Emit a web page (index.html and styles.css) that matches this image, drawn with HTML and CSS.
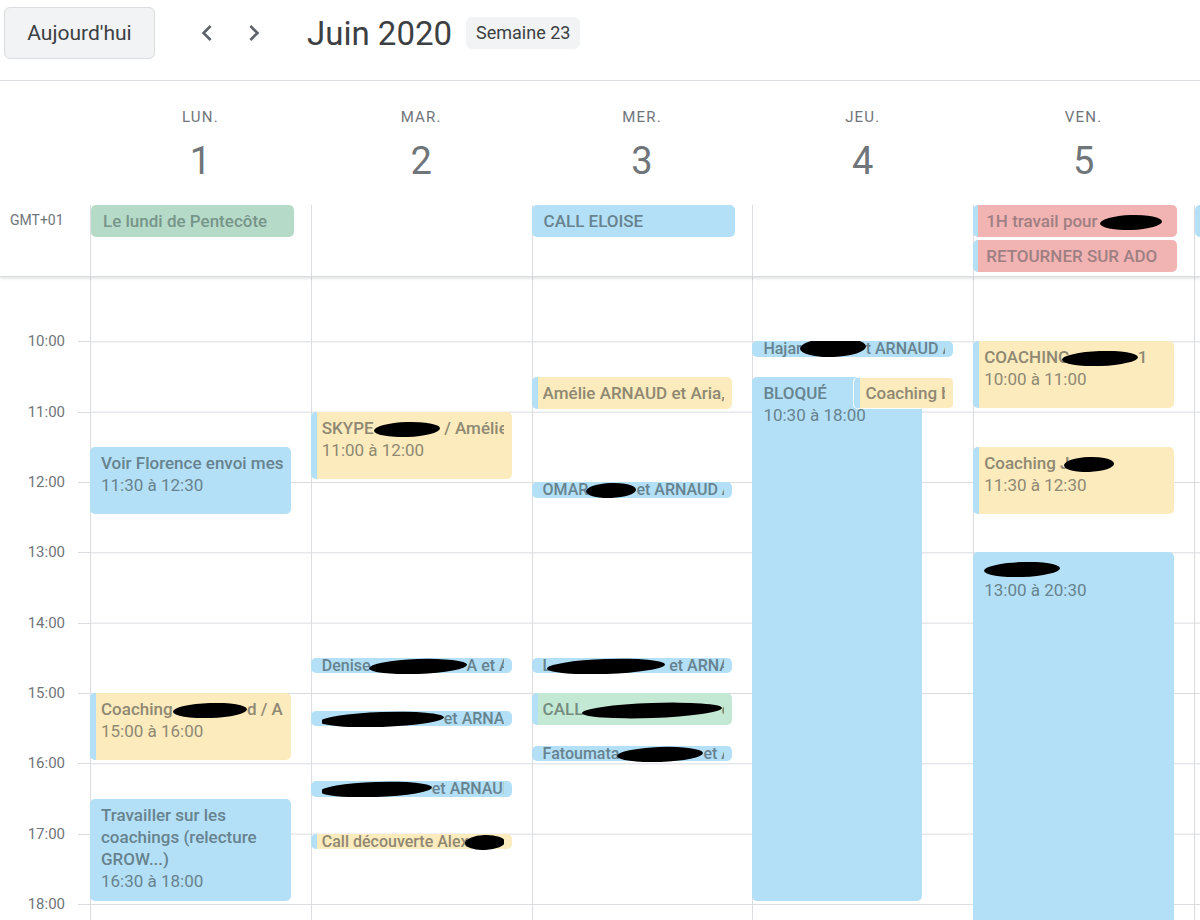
FILE: index.html
```html
<!DOCTYPE html>
<html lang="fr">
<head>
  <meta charset="UTF-8" />
  <title>Agenda - Semaine 23</title>
  <link rel="stylesheet" href="styles.css">
</head>
<body>
  <div class="topbar">
    <button class="today">Aujourd'hui</button>
    <button class="nav" aria-label="Semaine précédente">
      <svg viewBox="0 0 24 24" width="32" height="32"><path d="M15.41 7.41L14 6l-6 6 6 6 1.41-1.41L10.83 12z"/></svg>
    </button>
    <button class="nav" aria-label="Semaine suivante">
      <svg viewBox="0 0 24 24" width="32" height="32"><path d="M10 6L8.59 7.41 13.17 12l-4.58 4.59L10 18l6-6z"/></svg>
    </button>
    <h1 class="month">Juin 2020</h1>
    <span class="week-chip">Semaine 23</span>
  </div>

  <div class="days-head">
    <div></div>
    <div class="dayhead"><span class="dname">LUN.</span><span class="dnum">1</span></div>
    <div class="dayhead"><span class="dname">MAR.</span><span class="dnum">2</span></div>
    <div class="dayhead"><span class="dname">MER.</span><span class="dnum">3</span></div>
    <div class="dayhead"><span class="dname">JEU.</span><span class="dnum">4</span></div>
    <div class="dayhead"><span class="dname">VEN.</span><span class="dnum">5</span></div>
    <div></div>
  </div>

  <div class="allday">
    <div class="tz">GMT+01</div>
    <div class="acol">
      <div class="aev green">Le lundi de Pentecôte</div>
    </div>
    <div class="acol"></div>
    <div class="acol">
      <div class="aev blue">CALL ELOISE</div>
    </div>
    <div class="acol"></div>
    <div class="acol">
      <div class="aev pink stripe">1H travail pour <span class="ink" style="width:62px;margin-left:-2px"></span></div>
      <div class="aev pink stripe">RETOURNER SUR ADO</div>
    </div>
    <div class="acol">
      <div class="aev blue"></div>
    </div>
  </div>

  <div class="week-body">
    <div class="hours">
      <div class="hr"><span>10:00</span></div>
      <div class="hr"><span>11:00</span></div>
      <div class="hr"><span>12:00</span></div>
      <div class="hr"><span>13:00</span></div>
      <div class="hr"><span>14:00</span></div>
      <div class="hr"><span>15:00</span></div>
      <div class="hr"><span>16:00</span></div>
      <div class="hr"><span>17:00</span></div>
      <div class="hr"><span>18:00</span></div>
    </div>

    <!-- lundi -->
    <div class="col">
      <div class="ev blue" style="top:169.8px;height:67px">
        <div class="ttl">Voir Florence envoi mes photos</div>
        <div class="tm">11:30 à 12:30</div>
      </div>
      <div class="ev yellow stripe" style="top:416px;height:67px">
        <div class="ttl">Coaching <span class="ink" style="width:74px;margin-left:-4px"></span>d / Amélie</div>
        <div class="tm">15:00 à 16:00</div>
      </div>
      <div class="ev blue wrap" style="top:521.5px;height:102.5px">
        <div class="ttl">Travailler sur les coachings (relecture GROW...)</div>
        <div class="tm">16:30 à 18:00</div>
      </div>
    </div>

    <!-- mardi -->
    <div class="col">
      <div class="ev yellow stripe" style="top:134.7px;height:67px">
        <div class="ttl">SKYPE <span class="ink" style="width:66px;margin-left:-4px"></span> / Amélie</div>
        <div class="tm">11:00 à 12:00</div>
      </div>
      <div class="ev blue pill" style="top:380.8px;height:15.5px">
        <div class="ttl">Denise <span class="ink" style="width:98px;margin-left:-6px"></span>A et ARNAUD</div>
      </div>
      <div class="ev blue pill" style="top:433.6px;height:15.5px">
        <div class="ttl"><span class="ink" style="width:124px;margin-left:-2px"></span>et ARNAUD</div>
      </div>
      <div class="ev blue pill" style="top:504px;height:15.5px">
        <div class="ttl"><span class="ink" style="width:112px;margin-left:-2px"></span>et ARNAUD</div>
      </div>
      <div class="ev yellow stripe pill" style="top:556.7px;height:15.5px">
        <div class="ttl">Call découverte Alex<span class="ink" style="width:40px;margin-left:-4px"></span></div>
      </div>
    </div>

    <!-- mercredi -->
    <div class="col">
      <div class="ev yellow stripe" style="top:99.5px;height:32px">
        <div class="ttl">Amélie ARNAUD et Aria, coaching</div>
      </div>
      <div class="ev blue pill" style="top:205px;height:15.5px">
        <div class="ttl">OMAR<span class="ink" style="width:50px;margin-left:-2px"></span>et ARNAUD Amélie</div>
      </div>
      <div class="ev blue pill" style="top:380.8px;height:15.5px">
        <div class="ttl">L<span class="ink" style="width:118px;margin-left:-4px"></span> et ARNAUD</div>
      </div>
      <div class="ev green-ev stripe" style="top:416px;height:32px">
        <div class="ttl">CALL <span class="ink" style="width:140px;margin-left:-6px"></span>é</div>
      </div>
      <div class="ev blue pill" style="top:468.8px;height:15.5px">
        <div class="ttl">Fatoumata <span class="ink" style="width:86px;margin-left:-6px"></span>et ARNAUD</div>
      </div>
    </div>

    <!-- jeudi -->
    <div class="col">
      <div class="ev blue pill" style="top:64.3px;height:15.5px">
        <div class="ttl">Hajar <span class="ink tall" style="width:66px;margin-left:-6px"></span>t ARNAUD Amélie</div>
      </div>
      <div class="ev blue blocked" style="top:99.5px;height:524.5px">
        <div class="ttl">BLOQUÉ</div>
        <div class="tm">10:30 à 18:00</div>
      </div>
      <div class="ev yellow stripe side" style="top:99.5px;height:32px">
        <div class="ttl">Coaching bilan</div>
      </div>
    </div>

    <!-- vendredi -->
    <div class="col">
      <div class="ev yellow stripe" style="top:64.3px;height:67px">
        <div class="ttl">COACHING <span class="ink" style="width:76px;margin-left:-12px"></span>1</div>
        <div class="tm">10:00 à 11:00</div>
      </div>
      <div class="ev yellow stripe" style="top:169.8px;height:67px">
        <div class="ttl">Coaching J<span class="ink" style="width:50px;margin-left:-6px"></span></div>
        <div class="tm">11:30 à 12:30</div>
      </div>
      <div class="ev blue" style="top:275.3px;height:420px">
        <div class="ttl"><span class="ink" style="width:76px"></span></div>
        <div class="tm">13:00 à 20:30</div>
      </div>
    </div>

    <div class="col"></div>
  </div>
</body>
</html>
```

FILE: styles.css
```css
body {
  margin: 0;
  font-family: Roboto, "Liberation Sans", sans-serif;
  color: #3c4043;
  background: #fff;
  overflow: hidden;
}

.topbar {
  height: 81px;
  box-sizing: border-box;
  border-bottom: 1px solid #dadce0;
  display: flex;
  align-items: center;
  padding: 0 0 14px 4px;
}
.today {
  width: 151px;
  height: 52px;
  border: 1px solid #dadce0;
  background: #f1f3f4;
  border-radius: 6px;
  font-family: inherit;
  font-size: 21px;
  font-weight: 400;
  color: #3c4043;
  margin-right: 36px;
}
.nav {
  width: 32px;
  height: 32px;
  padding: 0;
  border: none;
  background: none;
  margin-right: 15px;
}
.nav svg {
  display: block;
  fill: #5f6368;
}
.month {
  margin: 0 0 0 22px;
  font-size: 33px;
  font-weight: 400;
  color: #3c4043;
}
.week-chip {
  margin-left: 14px;
  background: #f1f3f4;
  border-radius: 6px;
  padding: 0 10px;
  height: 32px;
  line-height: 32px;
  font-size: 18px;
}

.days-head,
.allday,
.week-body {
  display: grid;
  grid-template-columns: 90px repeat(5, 220.8px) 1fr;
}

.days-head {
  height: 124px;
}
.dayhead {
  display: flex;
  flex-direction: column;
  align-items: center;
  padding-top: 26px;
  color: #70757a;
}
.dname {
  font-size: 15px;
  line-height: 20px;
  letter-spacing: 1.2px;
  font-weight: 400;
}
.dnum {
  font-size: 38px;
  line-height: 44px;
  margin-top: 12px;
}

.allday {
  height: 72px;
  box-sizing: border-box;
  border-bottom: 1px solid #dadce0;
  box-shadow: 0 2px 2px rgba(60, 64, 67, 0.12);
  position: relative;
  z-index: 2;
  background: #fff;
}
.tz {
  font-size: 14px;
  line-height: 18px;
  padding: 6px 0 0 10px;
  color: #70757a;
}
.acol {
  border-left: 1px solid #dadce0;
  display: flex;
  flex-direction: column;
  gap: 3px;
  padding-right: 17px;
}
.aev {
  height: 32px;
  line-height: 32px;
  border-radius: 5px;
  padding-left: 12px;
  font-size: 17px;
  font-weight: 500;
  white-space: nowrap;
  overflow: hidden;
}
.acol:nth-child(4) .aev {
  margin-left: -1px;
}
.aev.stripe {
  border-left: 5px solid #b4e0f7;
  padding-left: 8px;
  margin-left: -1px;
}

.blue { background: #b4e0f7; color: #67838f; }
.yellow { background: #fcebbd; color: #8f8873; }
.green { background: #b6dac8; color: #76958a; }
.green-ev { background: #c3e8d3; color: #758c80; }
.pink { background: #f2b3b3; color: #9e8082; }

.week-body {
  height: 643px;
  overflow: hidden;
}
.hours {
  padding-top: 64.33px;
}
.hr {
  height: 70.333px;
  position: relative;
}
.hr::before {
  content: "";
  position: absolute;
  right: 0;
  top: 0;
  width: 12px;
  border-top: 1px solid #dadce0;
}
.hr span {
  display: block;
  position: relative;
  top: -9px;
  text-align: right;
  padding-right: 25px;
  font-size: 15px;
  line-height: 18px;
  color: #70757a;
}

.col {
  position: relative;
  border-left: 1px solid #dadce0;
  background-image: linear-gradient(#dadce0 1px, transparent 1px);
  background-size: 100% 70.333px;
  background-position: 0 64.33px;
}

.ev {
  position: absolute;
  left: -1px;
  right: 20px;
  box-sizing: border-box;
  border-radius: 5px;
  padding: 5px 8px 0 11px;
  overflow: hidden;
  font-size: 17px;
  line-height: 22px;
}
.ev .ttl {
  font-weight: 500;
  white-space: nowrap;
  overflow: hidden;
}
.ev.wrap .ttl {
  white-space: normal;
}
.ev.stripe {
  border-left: 6px solid #b4e0f7;
  padding-left: 5px;
}
.ev.pill {
  padding-top: 0;
  font-size: 16px;
  line-height: 16px;
  overflow: visible;
}
.ev.pill .ttl {
  overflow: hidden;
  height: 16px;
}
.ev.blocked {
  right: 51px;
}
.ev.side {
  left: 101px;
  right: 19px;
  border-top: 1px solid #fff;
  border-bottom: 1px solid #fff;
  border-right: 1px solid #fff;
  box-shadow: -1px 0 0 #fff;
  padding-top: 4px;
}

.ink {
  display: inline-block;
  height: 15px;
  background: #000;
  border-radius: 50%;
  vertical-align: middle;
  transform: rotate(-2deg);
}
.ink.tall {
  height: 19px;
  margin-top: -6px;
}
```
